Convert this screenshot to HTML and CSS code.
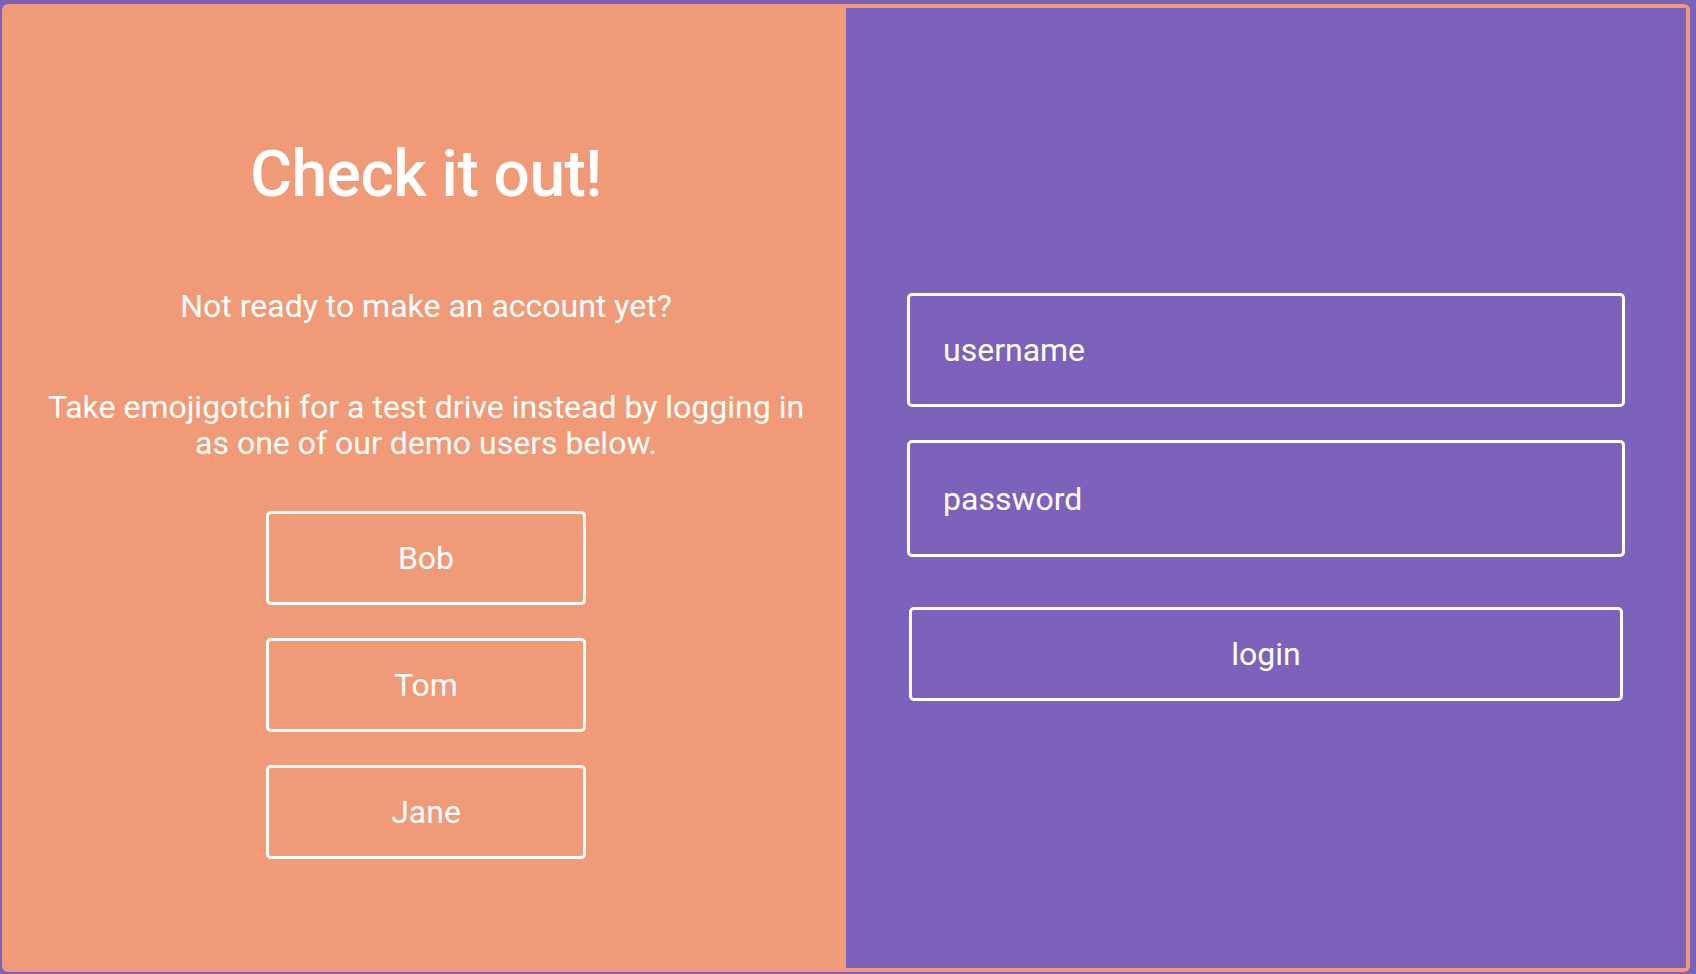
FILE: index.html
```html
<!DOCTYPE html>
<html lang="en">
<head>
<meta charset="utf-8">
<title>emojigotchi</title>
<link rel="stylesheet" href="styles.css">
</head>
<body>
<div class="frame">
  <section class="demo">
    <h1 class="title">Check it out!</h1>
    <p class="lead">Not ready to make an account yet?</p>
    <p class="info">Take emojigotchi for a test drive instead by logging in as one of our demo users below.</p>
    <div class="users">
      <button class="user-btn">Bob</button>
      <button class="user-btn">Tom</button>
      <button class="user-btn">Jane</button>
    </div>
  </section>
  <section class="login">
    <form class="login-form">
      <input class="field" type="text" placeholder="username">
      <input class="field field-pass" type="password" placeholder="password">
      <button class="login-btn" type="button">login</button>
    </form>
  </section>
</div>
</body>
</html>
```
FILE: styles.css
```css
html, body {
  margin: 0;
  padding: 0;
  background: #7d62bb;
  height: 100%;
}
body {
  padding: 4px 6px 2px 2px;
  box-sizing: border-box;
  font-family: Roboto, "Noto Sans", sans-serif;
  color: #fff;
}
.frame {
  height: 968px;
  box-sizing: border-box;
  background: #f09a78;
  border-radius: 6px;
  padding: 4px 4px 4px 0;
  display: grid;
  grid-template-columns: 844px 1fr;
}
.demo {
  display: flex;
  flex-direction: column;
  align-items: center;
  padding-top: 129px;
  padding-left: 4px;
}
.title {
  margin: 0;
  font-size: 64px;
  font-weight: 500;
  line-height: 75px;
  letter-spacing: -0.5px;
}
.lead {
  margin: 76px 0 0;
  font-size: 32px;
  line-height: 37px;
}
.info {
  margin: 64px 0 0;
  font-size: 32px;
  line-height: 36px;
  text-align: center;
  width: 770px;
}
.users {
  display: flex;
  flex-direction: column;
  gap: 33px;
  margin-top: 50px;
}
.user-btn {
  width: 320px;
  height: 94px;
  border: 3px solid #fff;
  border-radius: 5px;
  background: transparent;
  color: #fff;
  font-family: inherit;
  font-size: 32px;
  padding: 0;
}
.login {
  background: #7d62bb;
  display: flex;
  justify-content: center;
  padding-top: 285px;
}
.login-form {
  display: flex;
  flex-direction: column;
  align-items: center;
  width: 718px;
}
.field {
  width: 718px;
  height: 114px;
  box-sizing: border-box;
  border: 3px solid #fff;
  border-radius: 5px;
  background: transparent;
  color: #fff;
  font-family: inherit;
  font-size: 32px;
  padding: 0 33px;
  outline: none;
}
.field::placeholder {
  color: #fff;
  opacity: 1;
}
.field-pass {
  margin-top: 33px;
  height: 117px;
}
.login-btn {
  margin-top: 50px;
  width: 714px;
  height: 94px;
  border: 3px solid #fff;
  border-radius: 5px;
  background: transparent;
  color: #fff;
  font-family: inherit;
  font-size: 32px;
  padding: 0;
}
```
